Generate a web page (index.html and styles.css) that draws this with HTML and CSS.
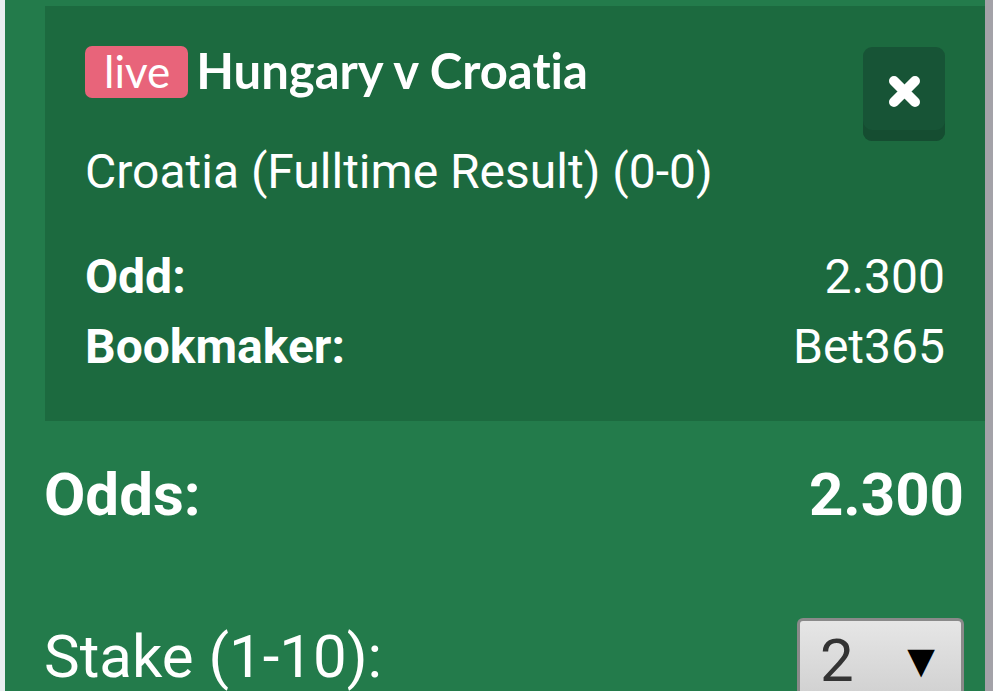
FILE: index.html
```html
<!DOCTYPE html>
<html>
<head>
<meta charset="utf-8">
<link rel="stylesheet" href="styles.css">
</head>
<body>
<div class="edge-left"></div>
<main class="panel">
  <section class="card">
    <div class="card-head">
      <div class="head-text">
        <div class="title-line">
          <span class="live">live</span>
          <span class="match">Hungary v Croatia</span>
        </div>
        <div class="selection">Croatia (Fulltime Result) (0-0)</div>
      </div>
      <button class="close" aria-label="Remove">
        <svg width="33" height="33" viewBox="0 0 33 33"><path d="M6 6 L27 27 M27 6 L6 27" stroke="#fff" stroke-width="10" stroke-linecap="round" fill="none"/></svg>
      </button>
    </div>
    <div class="info">
      <div class="info-row"><span class="label">Odd:</span><span class="value">2.300</span></div>
      <div class="info-row"><span class="label">Bookmaker:</span><span class="value">Bet365</span></div>
    </div>
  </section>
  <div class="odds-row"><span>Odds:</span><span>2.300</span></div>
  <div class="stake-row">
    <span class="stake-label">Stake (1-10):</span>
    <div class="stake-select"><span class="stake-val">2</span><span class="arrow">▼</span></div>
  </div>
</main>
<div class="edge-right"></div>
</body>
</html>
```
FILE: styles.css
```css
html, body {
  margin: 0;
  height: 100%;
  overflow: hidden;
}
body {
  display: flex;
  font-family: Roboto, "Liberation Sans", sans-serif;
  color: #fff;
  background: #237b4b;
}
.edge-left {
  width: 5px;
  flex: none;
  background: #e8eef0;
}
.edge-right {
  width: 8px;
  flex: none;
  background: #a3a2a8;
}
.panel {
  flex: 1;
  background: #237b4b;
  padding: 6px 0 0 40px;
}
.card {
  background: #1c6a3f;
  padding: 40px 40px 39px 40px;
}
.card-head {
  display: flex;
  justify-content: space-between;
  align-items: flex-start;
}
.title-line {
  display: flex;
  align-items: center;
  height: 52px;
  gap: 8px;
}
.live {
  background: #e8647a;
  border-radius: 7px;
  height: 52px;
  line-height: 50px;
  padding: 0 18px 0 19px;
  font-family: Lato, sans-serif;
  font-size: 44px;
  font-weight: 400;
}
.match {
  font-family: Lato, sans-serif;
  font-weight: 700;
  font-size: 49px;
  line-height: 52px;
  font-variant-ligatures: none;
  position: relative;
  top: -2px;
}
.selection {
  margin-top: 44px;
  font-size: 48px;
  line-height: 60px;
}
.close {
  width: 82px;
  height: 94px;
  margin: 1px 0 0;
  border: none;
  border-radius: 9px;
  background: #175436;
  box-shadow: inset 0 -11px 0 #154d31;
  display: flex;
  align-items: center;
  justify-content: center;
  padding: 0 0 6px;
  cursor: pointer;
}
.info {
  margin-top: 40px;
}
.info-row {
  display: flex;
  justify-content: space-between;
  font-size: 48px;
  line-height: 70px;
}
.label {
  font-weight: 700;
}
.odds-row {
  display: flex;
  justify-content: space-between;
  font-size: 60px;
  font-weight: 700;
  line-height: 80px;
  margin: 34px 21px 0 -1px;
}
.stake-row {
  display: flex;
  justify-content: space-between;
  align-items: flex-start;
  margin: 82px 21px 0 -1px;
}
.stake-label {
  font-size: 60px;
  line-height: 60px;
  margin-top: 10px;
}
.stake-select {
  width: 167px;
  height: 73px;
  margin-top: 1px;
  border: 3px solid #8a8a8a;
  border-bottom: none;
  border-radius: 6px 6px 0 0;
  background: linear-gradient(#e6e6e6, #d2d2d2);
  color: #333;
  display: flex;
  align-items: flex-start;
  justify-content: space-between;
  padding: 10px 26px 0 20px;
  box-sizing: border-box;
}
.stake-val {
  font-size: 60px;
  line-height: 60px;
}
.arrow {
  color: #000;
  font-family: "DejaVu Sans", sans-serif;
  font-size: 36px;
  line-height: 60px;
}
```
